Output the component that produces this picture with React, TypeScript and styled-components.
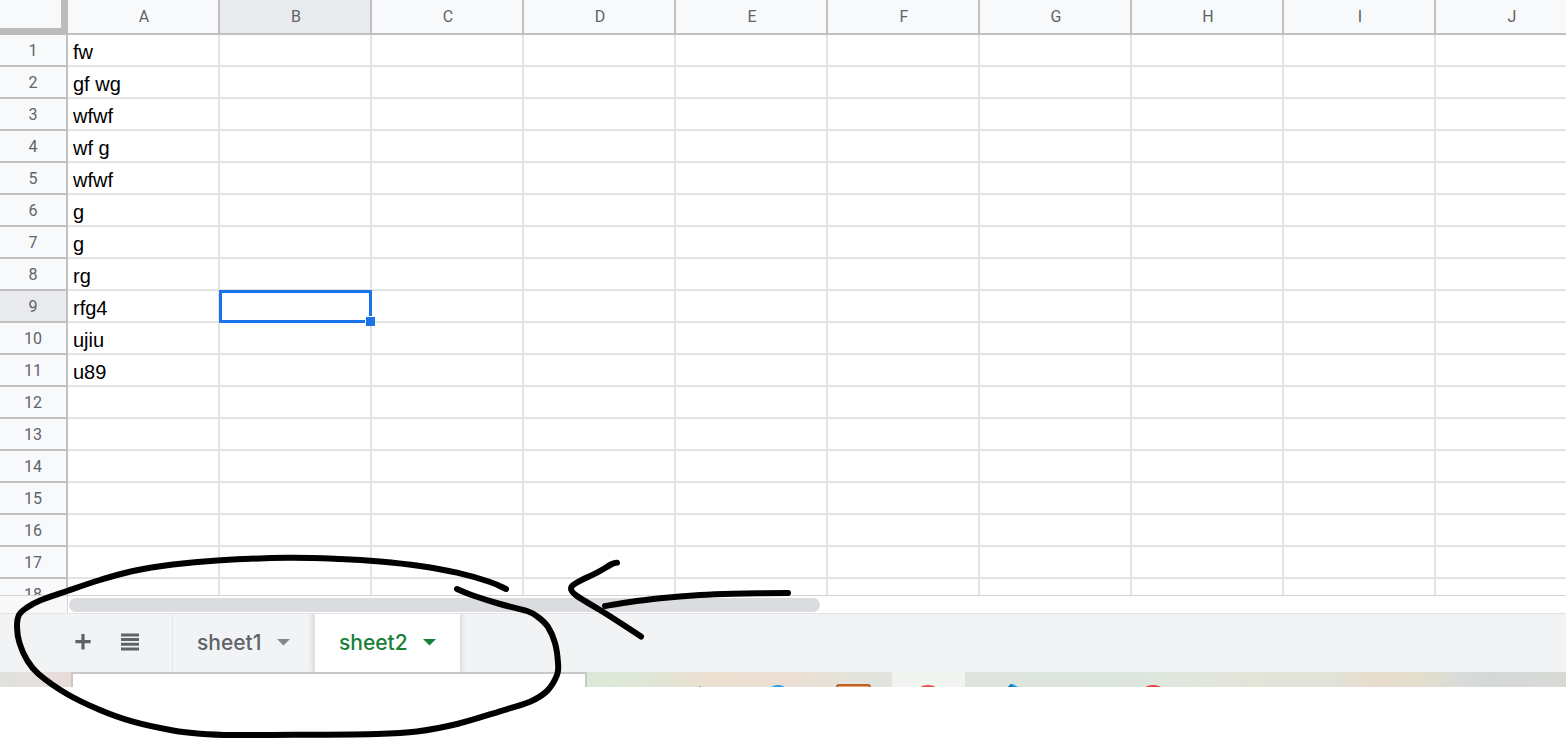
import React from "react";
import styled, { createGlobalStyle } from "styled-components";

const GlobalStyle = createGlobalStyle`
  * { box-sizing: border-box; }
  body { margin: 0; background: #fff; overflow: hidden; }
`;

const Page = styled.div`
  position: relative;
  display: flex;
  flex-direction: column;
  height: 100vh;
  overflow: hidden;
  font-family: Roboto, "Liberation Sans", sans-serif;
`;

const GridViewport = styled.main`
  flex: 1;
  min-height: 0;
  overflow: hidden;
`;

const Sheet = styled.table`
  table-layout: fixed;
  width: 1588px;
  border-collapse: separate;
  border-spacing: 0;
`;

const RowHeadCol = styled.col`
  width: 68px;
`;

const DataCol = styled.col`
  width: 152px;
`;

const Corner = styled.td`
  height: 35px;
  padding: 0;
  background: #f8f9fa;
  border-right: 7px solid #bcbcbc;
  border-bottom: 7px solid #bcbcbc;
`;

const HeadCell = styled.th<{ $selected?: boolean }>`
  padding: 0;
  font-size: 16px;
  font-weight: 400;
  line-height: 30px;
  color: #5f6368;
  background: ${(p) => (p.$selected ? "#e8eaed" : "#f8f9fa")};
  border-right: 2px solid #c0c0c0;
  border-bottom: 2px solid #c0c0c0;
`;

const ColumnHead = styled(HeadCell)`
  height: 35px;
  padding-left: 2px;
`;

const RowHead = styled(HeadCell)`
  height: 32px;
  padding-top: 2px;
  line-height: 28px;
`;

const Cell = styled.td`
  height: 32px;
  padding: 4px 0 0 5px;
  font-family: "Liberation Sans", Arial, sans-serif;
  font-size: 20px;
  line-height: 26px;
  color: #000;
  white-space: nowrap;
  border-right: 2px solid #e2e3e3;
  border-bottom: 2px solid #e2e3e3;
`;

const SelectedCell = styled(Cell)`
  position: relative;
  z-index: 1;
`;

const Selection = styled.div`
  position: absolute;
  inset: -1px -2px -2px -1px;
  border: 3px solid #1a73e8;
`;

const FillHandle = styled.div`
  position: absolute;
  right: -5px;
  bottom: -5px;
  width: 10px;
  height: 10px;
  background: #1a73e8;
  border-top: 1px solid #fff;
  border-left: 1px solid #fff;
`;

const ScrollRow = styled.div`
  display: flex;
  height: 18px;
  border-top: 1px solid #d2d3d4;
`;

const ScrollCorner = styled.div`
  width: 68px;
  background: #f8f8f8;
  border-right: 1px solid #d5d5d5;
`;

const ScrollTrack = styled.div`
  flex: 1;
  padding: 2px 1px;
`;

const ScrollThumb = styled.div`
  width: 50.2%;
  height: 14px;
  border-radius: 7px;
  background: #dadce0;
`;

const TabBar = styled.nav`
  display: flex;
  height: 59px;
  padding-left: 67px;
  background: #f1f3f4;
  border-top: 1px solid #e3e4e5;
`;

const Tools = styled.div`
  display: flex;
  align-items: center;
  gap: 15px;
  width: 105px;
  padding-bottom: 2px;
`;

const ToolButton = styled.button`
  display: flex;
  align-items: center;
  justify-content: center;
  width: 32px;
  height: 32px;
  padding: 0;
  border: 0;
  background: none;
`;

const Tab = styled.button<{ $active?: boolean }>`
  display: flex;
  align-items: center;
  justify-content: space-between;
  min-width: ${(p) => (p.$active ? 146 : 142)}px;
  padding: 0 24px 2px;
  border: 0;
  border-left: 1px solid ${(p) => (p.$active ? "#dfe1e3" : "#e6e8ea")};
  font-family: Inter, sans-serif;
  font-size: 21px;
  font-weight: 500;
  color: ${(p) => (p.$active ? "#188038" : "#5f6368")};
  background: ${(p) => (p.$active ? "#fff" : "transparent")};
  box-shadow: ${(p) => (p.$active ? "0 0 5px 1px rgba(60, 64, 67, 0.2)" : "none")};
  clip-path: inset(0 -8px);
`;

const Caret = styled.svg<{ $active?: boolean }>`
  width: 13px;
  height: 7px;
  fill: ${(p) => (p.$active ? "#188038" : "#80868b")};
`;

const Taskbar = styled.footer`
  position: relative;
  display: flex;
  height: 15px;
  margin-bottom: 54px;
  overflow: hidden;
  background: linear-gradient(
    90deg,
    #dfe2dc 0%,
    #e8dfdc 3%,
    #e9d9d9 5%,
    #dcead8 37%,
    #dfe7d8 41%,
    #ebdfd1 45%,
    #ece0d5 51%,
    #e2e4dc 55%,
    #dee4dd 62%,
    #dce4de 71%,
    #e0e7de 75%,
    #e4e4d9 80%,
    #e1e2d8 85%,
    #e8dccb 88%,
    #e1decd 91%,
    #d9dcd8 93%,
    #d5d8d8 95%,
    #d8dad6 100%
  );
`;

const SearchPanel = styled.div`
  width: 516px;
  margin-left: 71px;
  background: #fff;
  border: 2px solid #c8c8c8;
  border-bottom: 0;
`;

const TaskButtons = styled.div`
  display: flex;
  gap: 2px;
  margin-left: 80px;
`;

const TaskButton = styled.button<{ $active?: boolean }>`
  display: flex;
  justify-content: center;
  width: 73px;
  height: 15px;
  padding: 0;
  border: 0;
  background: ${(p) => (p.$active ? "#f2f4f1" : "none")};
`;

const Ink = styled.svg`
  position: absolute;
  top: 0;
  left: 0;
  width: 800px;
  height: 741px;
  pointer-events: none;
  fill: none;
  stroke: #000;
  stroke-width: 6;
  stroke-linecap: round;
  stroke-linejoin: round;
`;

type Point = [number, number];

/* Catmull-Rom spline through the points, written as cubic segments. */
function smooth(points: Point[]): string {
  const at = (i: number) => points[Math.max(0, Math.min(points.length - 1, i))];
  let d = `M${points[0][0]} ${points[0][1]}`;
  for (let i = 0; i < points.length - 1; i++) {
    const [p0, p1, p2, p3] = [at(i - 1), at(i), at(i + 1), at(i + 2)];
    d += ` C${p1[0] + (p2[0] - p0[0]) / 6} ${p1[1] + (p2[1] - p0[1]) / 6} ${p2[0] - (p3[0] - p1[0]) / 6} ${p2[1] - (p3[1] - p1[1]) / 6} ${p2[0]} ${p2[1]}`;
  }
  return d;
}

const loop: Point[] = [
  [506, 589], [490, 582], [457, 572.7], [420, 566], [380, 561.5], [340, 559], [287, 557.8],
  [217, 560.5], [173, 564.5], [133, 571], [100, 580], [67, 591], [40, 600.5], [27, 607.5],
  [19, 615], [17, 627], [19.5, 643], [27, 660], [38.5, 674], [67, 694], [100, 710],
  [133, 721.7], [173, 730.5], [200, 733.7], [233, 735], [300, 734.8], [377, 734],
  [417, 731.5], [457, 724], [500, 711.3], [530, 701.7], [547, 691], [557, 675], [558, 663],
  [555, 643], [548, 627], [538, 617], [527, 611], [500, 604], [473, 595.5], [457, 589],
];
const arrowHead: Point[] = [
  [617, 562.7], [612, 564], [597, 572.7], [577, 582.5], [571, 588.7], [577, 596],
  [600, 610], [620, 622.7], [641, 636.5],
];
const arrowShaft: Point[] = [
  [605, 606], [626.7, 602.5], [660, 598.3], [700, 595], [733, 593.7], [788, 593],
];

const columns = ["A", "B", "C", "D", "E", "F", "G", "H", "I", "J"];
const values = ["fw", "gf wg", "wfwf", "wf g", "wfwf", "g", "g", "rg", "rfg4", "ujiu", "u89"];
const rows = Array.from({ length: 18 }, (_, i) => i + 1);

function SheetTab({ name, active }: { name: string; active?: boolean }) {
  return (
    <Tab $active={active} aria-pressed={!!active}>
      {name}
      <Caret $active={active} viewBox="0 0 13 7" aria-hidden="true">
        <path d="M0 0H13L6.5 6.5Z" />
      </Caret>
    </Tab>
  );
}

export default function App() {
  return (
    <Page>
      <GlobalStyle />
      <GridViewport>
        <Sheet>
          <colgroup>
            <RowHeadCol />
            {columns.map((c) => (
              <DataCol key={c} />
            ))}
          </colgroup>
          <thead>
            <tr>
              <Corner />
              {columns.map((c) => (
                <ColumnHead key={c} scope="col" $selected={c === "B"}>
                  {c}
                </ColumnHead>
              ))}
            </tr>
          </thead>
          <tbody>
            {rows.map((r) => (
              <tr key={r}>
                <RowHead scope="row" $selected={r === 9}>
                  {r}
                </RowHead>
                {columns.map((c) =>
                  c === "B" && r === 9 ? (
                    <SelectedCell key={c}>
                      <Selection />
                      <FillHandle />
                    </SelectedCell>
                  ) : (
                    <Cell key={c}>{c === "A" && values[r - 1]}</Cell>
                  )
                )}
              </tr>
            ))}
          </tbody>
        </Sheet>
      </GridViewport>
      <ScrollRow>
        <ScrollCorner />
        <ScrollTrack>
          <ScrollThumb />
        </ScrollTrack>
      </ScrollRow>
      <TabBar>
        <Tools>
          <ToolButton aria-label="Add sheet">
            <svg width="16" height="16" viewBox="0 0 16 16" fill="#5f6368">
              <path d="M6.4 0h3.2v6.1h6v3.2h-6v6.1H6.4V9.3h-6V6.1h6z" />
            </svg>
          </ToolButton>
          <ToolButton aria-label="All sheets">
            <svg width="18" height="18" viewBox="0 0 18 18" fill="#5f6368">
              <path d="M0 0.5h18v3H0zM0 5h18v3H0zM0 9.8h18v3H0zM0 14.5h18v3H0z" />
            </svg>
          </ToolButton>
        </Tools>
        <SheetTab name="sheet1" />
        <SheetTab name="sheet2" active />
      </TabBar>
      <Taskbar>
        <SearchPanel />
        <TaskButtons>
          <TaskButton aria-label="Task view">
            <svg width="36" height="15">
              <circle cx="14" cy="15" r="1" fill="#9a9f94" />
            </svg>
          </TaskButton>
          <TaskButton aria-label="Browser">
            <svg width="36" height="15">
              <ellipse cx="17" cy="16" rx="7" ry="3" fill="#2ba3e6" />
            </svg>
          </TaskButton>
          <TaskButton aria-label="Files">
            <svg width="36" height="15">
              <rect x="1" y="13" width="33" height="10" rx="2" fill="#f0a468" stroke="#b8622a" strokeWidth="2" />
            </svg>
          </TaskButton>
          <TaskButton aria-label="Chrome" $active>
            <svg width="36" height="15">
              <ellipse cx="17" cy="16" rx="8" ry="3" fill="#e2584c" />
            </svg>
          </TaskButton>
          <TaskButton aria-label="Code editor">
            <svg width="36" height="15">
              <path d="M22 15L25 12H27L32 15Z" fill="#23a4ea" />
              <path d="M22 15L25 12L27 15Z" fill="#0a70b8" />
            </svg>
          </TaskButton>
          <TaskButton aria-label="Mail" />
          <TaskButton aria-label="Media">
            <svg width="36" height="15">
              <ellipse cx="17" cy="16" rx="8" ry="3" fill="#e2483c" />
            </svg>
          </TaskButton>
        </TaskButtons>
      </Taskbar>
      <Ink viewBox="0 0 800 741" aria-hidden="true">
        <path d={smooth(loop)} />
        <path d={smooth(arrowHead)} />
        <path d={smooth(arrowShaft)} />
      </Ink>
    </Page>
  );
}
